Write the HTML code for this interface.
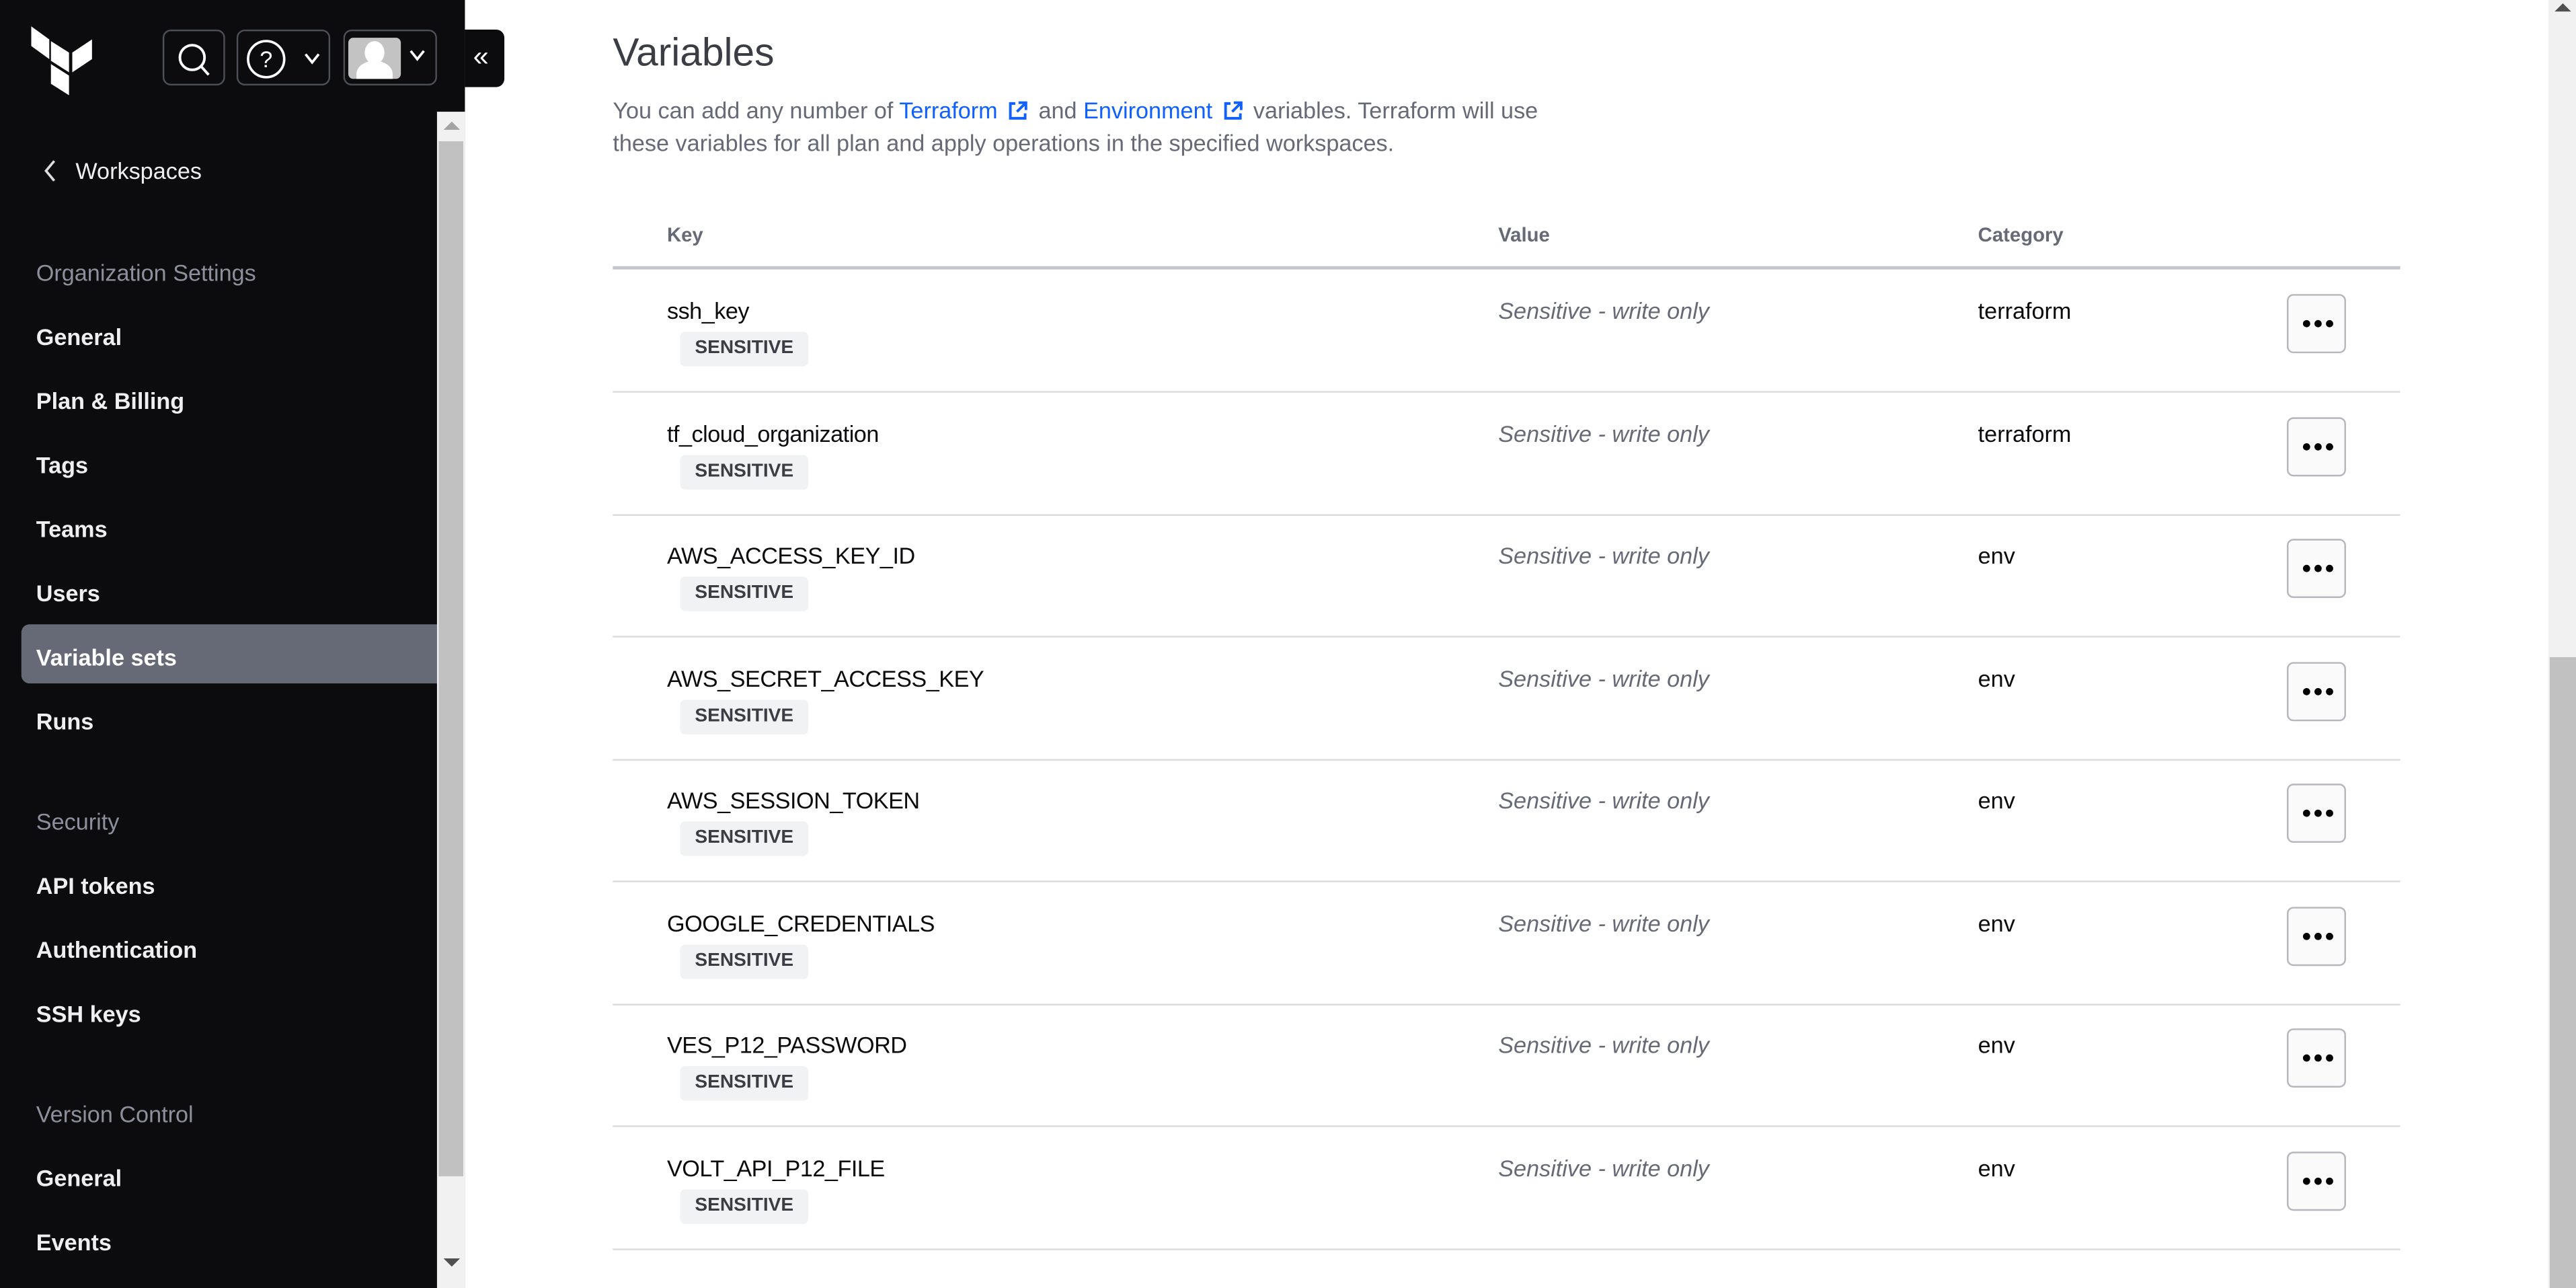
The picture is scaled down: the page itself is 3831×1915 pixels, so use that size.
<!DOCTYPE html>
<html><head><meta charset="utf-8"><style>
html,body{margin:0;padding:0;background:#fff;overflow:hidden;width:3831px;height:1915px}
#w{position:absolute;left:0;top:0;width:1568px;height:784px;transform:scale(2.44324,2.44260);transform-origin:0 0;font-family:"Liberation Sans",sans-serif}
.a{position:absolute;white-space:nowrap}
#sb{position:absolute;left:0;top:0;width:283px;height:784px;background:#0c0c0e}
.nav{position:absolute;left:22px;color:#efeff1;font-size:14px;font-weight:600}
.grp{position:absolute;left:22px;color:#8c909c;font-size:14px}
.btn{position:absolute;top:18px;height:34px;border:1px solid #4d4f57;border-radius:5px;box-sizing:border-box}
.hd{position:absolute;top:136px;font-size:12px;font-weight:bold;color:#656a76}
.k{position:absolute;left:406px;font-size:14px;color:#0c0c0e;letter-spacing:-0.2px}
.bd{position:absolute;left:414px;width:78px;height:21px;background:#f1f2f3;border-radius:3px;color:#3b3d45;font-size:11.5px;font-weight:bold;text-align:center;line-height:21px}
.v{position:absolute;left:912px;font-size:14px;font-style:italic;color:#656a76}
.c{position:absolute;left:1204px;font-size:14px;color:#0c0c0e}
.m{position:absolute;left:1392px;width:36px;height:36px;box-sizing:border-box;border:1px solid #b5b7bd;border-radius:4px;background:#fafafa}
.m svg{position:absolute;left:8px;top:14px}
.ln{position:absolute;left:373px;width:1088px;height:1px;background:#dbdbdc}
.ext{display:inline-block;vertical-align:-2px;margin:0 2px 0 6px}
</style></head><body><div id="w">
<div id="sb">
<svg class="a" style="left:19px;top:16px" width="38" height="42" viewBox="0 0 38 42"><g fill="#fff"><path d="M0 0 L11 8 V20 L0 12Z"/><path d="M12 9 L23 16 V28 L12 21Z"/><path d="M25 16 L37 8 V20 L25 28Z"/><path d="M12 23 L23 30 V42 L12 35Z"/></g></svg>
<div class="btn" style="left:99px;width:38px"><svg class="a" style="left:7px;top:6px" width="24" height="22" viewBox="0 0 24 22"><circle cx="10" cy="10" r="7.5" fill="none" stroke="#fff" stroke-width="1.6"/><path d="M15.5 15.5 L20 20.5" stroke="#fff" stroke-width="1.6"/></svg></div>
<div class="btn" style="left:144px;width:57px"><svg class="a" style="left:5px;top:5px" width="48" height="24" viewBox="0 0 48 24"><circle cx="12" cy="12" r="11" fill="none" stroke="#fff" stroke-width="1.5"/><text x="12" y="17" fill="#fff" font-size="14" text-anchor="middle" font-family="Liberation Sans">?</text><path d="M36 9 L40 14 L44 9" fill="none" stroke="#fff" stroke-width="1.5"/></svg></div>
<div class="btn" style="left:209px;width:57px"><div class="a" style="left:2px;top:4px;width:32px;height:25px;background:#c3c3c3;border-radius:3px;overflow:hidden"><div class="a" style="left:10px;top:2px;width:12px;height:14px;border-radius:50%;background:#fff"></div><div class="a" style="left:5px;top:14px;width:22px;height:16px;border-radius:50% 50% 0 0;background:#fff"></div></div><svg class="a" style="left:39px;top:10px" width="12" height="10"><path d="M1 2 L5 7 L9 2" fill="none" stroke="#fff" stroke-width="1.5"/></svg></div>
<svg class="a" style="left:26px;top:97px" width="10" height="14"><path d="M7 1 L2 7 L7 13" fill="none" stroke="#ddd" stroke-width="1.5"/></svg>
<div class="nav a" style="left:46px;top:96px;font-weight:500">Workspaces</div>
<div class="grp a" style="top:158px">Organization Settings</div>
<div class="nav a" style="top:197px">General</div>
<div class="nav a" style="top:236px">Plan &amp; Billing</div>
<div class="nav a" style="top:275px">Tags</div>
<div class="nav a" style="top:314px">Teams</div>
<div class="nav a" style="top:353px">Users</div>
<div class="a" style="left:13px;top:380px;width:253px;height:36px;background:#656a76;border-radius:5px 0 0 5px"></div>
<div class="nav a" style="top:392px;color:#fff">Variable sets</div>
<div class="nav a" style="top:431px">Runs</div>
<div class="grp a" style="top:492px">Security</div>
<div class="nav a" style="top:531px">API tokens</div>
<div class="nav a" style="top:570px">Authentication</div>
<div class="nav a" style="top:609px">SSH keys</div>
<div class="grp a" style="top:670px">Version Control</div>
<div class="nav a" style="top:709px">General</div>
<div class="nav a" style="top:748px">Events</div>
<div class="a" style="left:266px;top:68px;width:17px;height:716px;background:#f1f1f1"></div>
<div class="a" style="left:267px;top:86px;width:15px;height:630px;background:#c1c1c1"></div>
<div class="a" style="left:270px;top:74px;width:0;height:0;border-left:5px solid transparent;border-right:5px solid transparent;border-bottom:5px solid #a3a3a3"></div>
<div class="a" style="left:270px;top:766px;width:0;height:0;border-left:5px solid transparent;border-right:5px solid transparent;border-top:5px solid #505050"></div>
</div>
<div class="a" style="left:283px;top:18px;width:24px;height:35px;background:#0c0c0e;border-radius:0 5px 5px 0"></div>
<div class="a" style="left:288px;top:25px;color:#fff;font-size:17px">«</div>
<div class="a" style="left:373px;top:19px;font-size:24px;color:#3b3d45">Variables</div>
<div class="a" style="left:373px;top:57px;font-size:14px;color:#656a76;line-height:20px">You can add any number of <span style="color:#1060ff">Terraform<svg class="ext" width="13" height="13" viewBox="0 0 13 13"><path d="M5 2 H2 V11 H11 V8 M7 1.5 H11.5 V6 M11.5 1.5 L6 7" fill="none" stroke="#1060ff" stroke-width="1.6"/></svg></span> and <span style="color:#1060ff">Environment<svg class="ext" width="13" height="13" viewBox="0 0 13 13"><path d="M5 2 H2 V11 H11 V8 M7 1.5 H11.5 V6 M11.5 1.5 L6 7" fill="none" stroke="#1060ff" stroke-width="1.6"/></svg></span> variables. Terraform will use<br>these variables for all plan and apply operations in the specified workspaces.</div>
<div class="hd" style="left:406px">Key</div><div class="hd" style="left:912px">Value</div><div class="hd" style="left:1204px">Category</div>
<div class="a" style="left:373px;top:162px;width:1088px;height:2px;background:#c2c5cb"></div>
<div class="a" style="left:1551px;top:0;width:17px;height:784px;background:#f1f1f1"></div>
<div class="a" style="left:1552px;top:400px;width:16px;height:384px;background:#c1c1c1"></div>
<div class="a" style="left:1555px;top:2px;width:0;height:0;border-left:5px solid transparent;border-right:5px solid transparent;border-bottom:5px solid #505050"></div>
<div id="rows"></div>
</div>
<script>
var d=[["ssh_key","terraform"],["tf_cloud_organization","terraform"],["AWS_ACCESS_KEY_ID","env"],["AWS_SECRET_ACCESS_KEY","env"],["AWS_SESSION_TOKEN","env"],["GOOGLE_CREDENTIALS","env"],["VES_P12_PASSWORD","env"],["VOLT_API_P12_FILE","env"]];
var dots='<svg width="20" height="6"><circle cx="3" cy="3" r="2.2"/><circle cx="10" cy="3" r="2.2"/><circle cx="17" cy="3" r="2.2"/></svg>';
var h="";d.forEach(function(r,i){var t=164+i*74.5;
h+='<div class="k a" style="top:'+(t+17)+'px">'+r[0]+'</div><div class="bd" style="top:'+(t+38)+'px">SENSITIVE</div><div class="v a" style="top:'+(t+17)+'px">Sensitive - write only</div><div class="c a" style="top:'+(t+17)+'px">'+r[1]+'</div><div class="m" style="top:'+(t+15)+'px">'+dots+'</div><div class="ln" style="top:'+(t+74)+'px"></div>';});
document.getElementById("rows").innerHTML=h;
</script>
</body></html>
